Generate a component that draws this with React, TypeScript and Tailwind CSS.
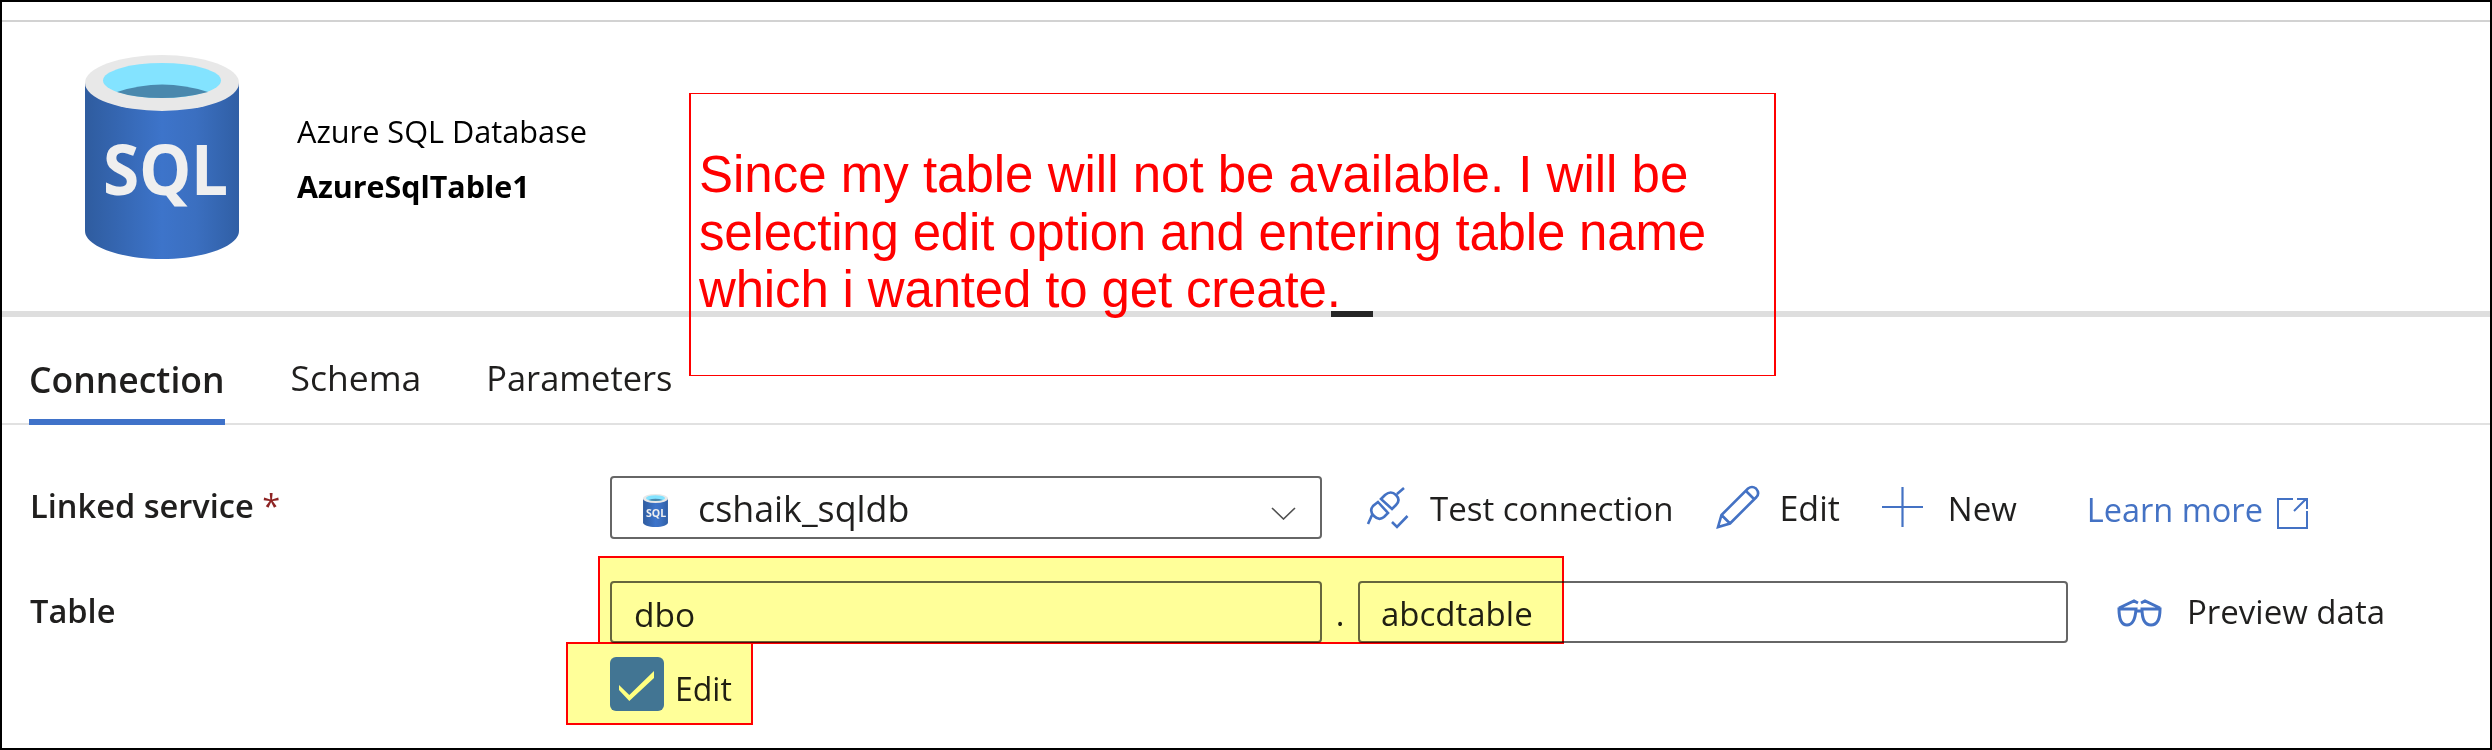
import React from "react";

const blue = "#4472c4";

function Db({ className, id }: { className: string; id: string }) {
  return (
    <svg viewBox="0 0 154 204" className={className}>
      <defs>
        <linearGradient id={id} x1="0" x2="1" y1="0" y2="0">
          <stop offset="0" stopColor="#2f5c9f" />
          <stop offset="0.5" stopColor="#3d74ca" />
          <stop offset="0.72" stopColor="#3b6fc0" />
          <stop offset="1" stopColor="#305fa5" />
        </linearGradient>
      </defs>
      <path d="M0 28V176C0 191 34 204 77 204C120 204 154 191 154 176V28Z" fill={`url(#${id})`} />
      <ellipse cx="77" cy="28" rx="77" ry="28" fill="#e8e8e8" />
      <ellipse cx="77" cy="25.5" rx="59" ry="17.5" fill="#83e3ff" />
      <path d="M32 37Q77 22 123 37Q100 43 77 43Q50 43 32 37Z" fill="#4a88ad" />
      <text
        x="18"
        y="140"
        fontSize="70"
        fontWeight="700"
        fill="#efefef"
        textLength="125"
        lengthAdjust="spacingAndGlyphs"
        style={{ fontFamily: '"Noto Sans", sans-serif' }}
      >
        SQL
      </text>
    </svg>
  );
}

function Plug() {
  return (
    <svg viewBox="0 0 70 62" className="w-[70px] h-[62px]" fill="none" stroke={blue} strokeWidth="2.6">
      <path d="M49 12L42 18M26 23L30 19Q36 14 41 19Q46 24 41 29L37 33ZM23 26L33 37L29 41Q24 45 19 40Q14 35 18 30ZM17 39L13 48M37 46L42 51L52.5 40" />
    </svg>
  );
}

function Pencil() {
  return (
    <svg viewBox="0 0 70 62" className="w-[70px] h-[62px]" fill="none" stroke={blue} strokeWidth="2.6">
      <path d="M12 51L15.5 39L42 12.5Q46 9.5 50 12.5Q54 17 50.5 21L24 47.5ZM15.5 39L24 47.5M40 15L48 23" />
    </svg>
  );
}

function Glasses() {
  return (
    <svg viewBox="0 0 70 42" className="w-[70px] h-[42px]" fill="none" stroke={blue} strokeWidth="3">
      <path d="M14 19H31Q30 35 22 35Q14 35 14 19ZM37 19H55Q55 35 46 35Q37 35 37 19ZM31 21H37M14 18L29 11L33 13M55 18L40 11L36 13" />
    </svg>
  );
}

function External() {
  return (
    <svg viewBox="0 0 55 45" className="w-[55px] h-[45px]" fill="none" stroke={blue} strokeWidth="2">
      <path d="M27 9H12V38H41V21M28 21L40 9M31 9H41V19" />
    </svg>
  );
}

const field = "border-2 border-[#666666] rounded-[4px]";

export default function App() {
  return (
    <div
      className="relative w-[2492px] h-[750px] bg-white border-2 border-black overflow-hidden text-[#201f1e] text-[33px]"
      style={{ fontFamily: '"Open Sans", "Noto Sans", sans-serif' }}
    >
      <div className="h-[20px] border-b-2 border-[#d2d2d2]" />

      <div className="h-[289px] flex items-start pt-[33px] pl-[83px]">
        <Db id="big" className="w-[154px] h-[204px]" />
        <div className="ml-[58px] pt-[56px] text-black">
          <div className="text-[30.7px] leading-[40px]">Azure SQL Database</div>
          <div className="text-[30.4px] leading-[40px] font-bold mt-[16px]">AzureSqlTable1</div>
        </div>
      </div>

      <div className="relative h-[6px] bg-[#dedede]">
        <div className="absolute left-[1329px] top-0 w-[42px] h-[6px] bg-[#262626]" />
      </div>

      <div className="h-[108px] flex items-end pl-[27px] gap-[66px] border-b-2 border-[#e1e1e1]">
        <div className="h-[72px] -mb-[2px] text-[35.5px] font-semibold border-b-[6px] border-[#3f72c9] leading-[52px]">Connection</div>
        <div className="h-[72px] text-[35.5px] leading-[52px]">Schema</div>
        <div className="h-[72px] -ml-[1px] text-[34.4px] leading-[54px]">Parameters</div>
      </div>

      <div className="flex items-start pl-[28px] mt-[51px]">
        <div className="w-[580px] h-[63px] pt-[8px] text-[32.6px] font-semibold leading-[44px]">
          Linked service <span className="text-[#8e2424] font-normal">*</span>
        </div>
        <div className={`${field} w-[712px] h-[63px] flex items-center pl-[31px] pr-[24px]`}>
          <Db id="small" className="w-[25px] h-[33px] mt-[6px]" />
          <span className="ml-[30px] flex-1 text-[35.8px] leading-none pt-[3px]">cshaik_sqldb</span>
          <svg viewBox="0 0 25 13" className="w-[25px] h-[13px] mt-[12px]" fill="none" stroke="#505050" strokeWidth="1.6">
            <path d="M1 1L12.5 12L24 1" />
          </svg>
        </div>
        <div className="ml-[46px] -mt-[1px] flex items-center h-[63px]">
          <div className="-ml-[13px] w-[64px]"><Plug /></div>
          <span className="ml-[11px] pt-[4px]">Test connection</span>
          <div className="ml-[33px] w-[73px]"><Pencil /></div>
          <span className="text-[34px] pt-[4px]">Edit</span>
          <svg viewBox="0 0 41 40" className="ml-[42px] w-[41px] h-[40px]" fill="none" stroke={blue} strokeWidth="2.2">
            <path d="M20.5 0V40M0 20H41" />
          </svg>
          <span className="ml-[25px] pt-[4px]">New</span>
          <span className="ml-[70px] mt-[8px] text-[32.5px]" style={{ color: blue }}>Learn more</span>
          <div className="w-[55px] h-[45px] -mr-[20px] mt-[12px] ml-[3px]"><External /></div>
        </div>
      </div>

      <div className="flex items-start pl-[28px] mt-[42px]">
        <div className="w-[580px] h-[62px] pt-[8px] text-[32.6px] font-semibold leading-[44px]">Table</div>
        <div className={`${field} w-[712px] h-[62px] flex items-center pl-[22px] pt-[4px] text-[33.5px]`}>dbo</div>
        <div className="w-[36px] h-[62px] text-center leading-[65px]">.</div>
        <div className={`${field} w-[710px] h-[62px] flex items-center pl-[21px] pt-[4px] text-[33px]`}>abcdtable</div>
        <div className="ml-[37px] w-[82px] h-[62px] pt-[9px]"><Glasses /></div>
        <span className="h-[62px] leading-[62px]">Preview data</span>
      </div>

      <div className="flex items-center pl-[608px] mt-[12px]">
        <div className="w-[54px] h-[54px] rounded-[6px] bg-[#4275f5] flex items-center justify-center">
          <svg viewBox="0 0 54 54" className="w-[54px] h-[54px]">
            <polygon points="9,28 19.3,38 44,14 44,21 19.3,44 9,33" fill="#ffffd6" />
          </svg>
        </div>
        <span className="ml-[11px] mt-[10px] text-[32px]">Edit</span>
      </div>

      <div className="absolute left-[687px] top-[91px] w-[1087px] h-[283px] border-x-2 border-y border-[#ff0000] pl-[8px] pt-[52px] text-[#ff0000] text-[51px] leading-[57.5px] whitespace-nowrap" style={{ fontFamily: '"Liberation Sans", Arial, sans-serif' }}>
        <div>Since my table will not be available. I will be</div>
        <div className="tracking-[-0.18px]">selecting edit option and entering table name</div>
        <div className="tracking-[-0.16px]">which i wanted to get create.</div>
      </div>

      <div className="absolute left-[596px] top-[554px] w-[966px] h-[88px] border-2 border-[#ff0000] bg-[#ffff99] mix-blend-multiply" />
      <div className="absolute left-[564px] top-[640px] w-[187px] h-[83px] border-2 border-[#ff0000] bg-[#ffff99] mix-blend-multiply" />
    </div>
  );
}
